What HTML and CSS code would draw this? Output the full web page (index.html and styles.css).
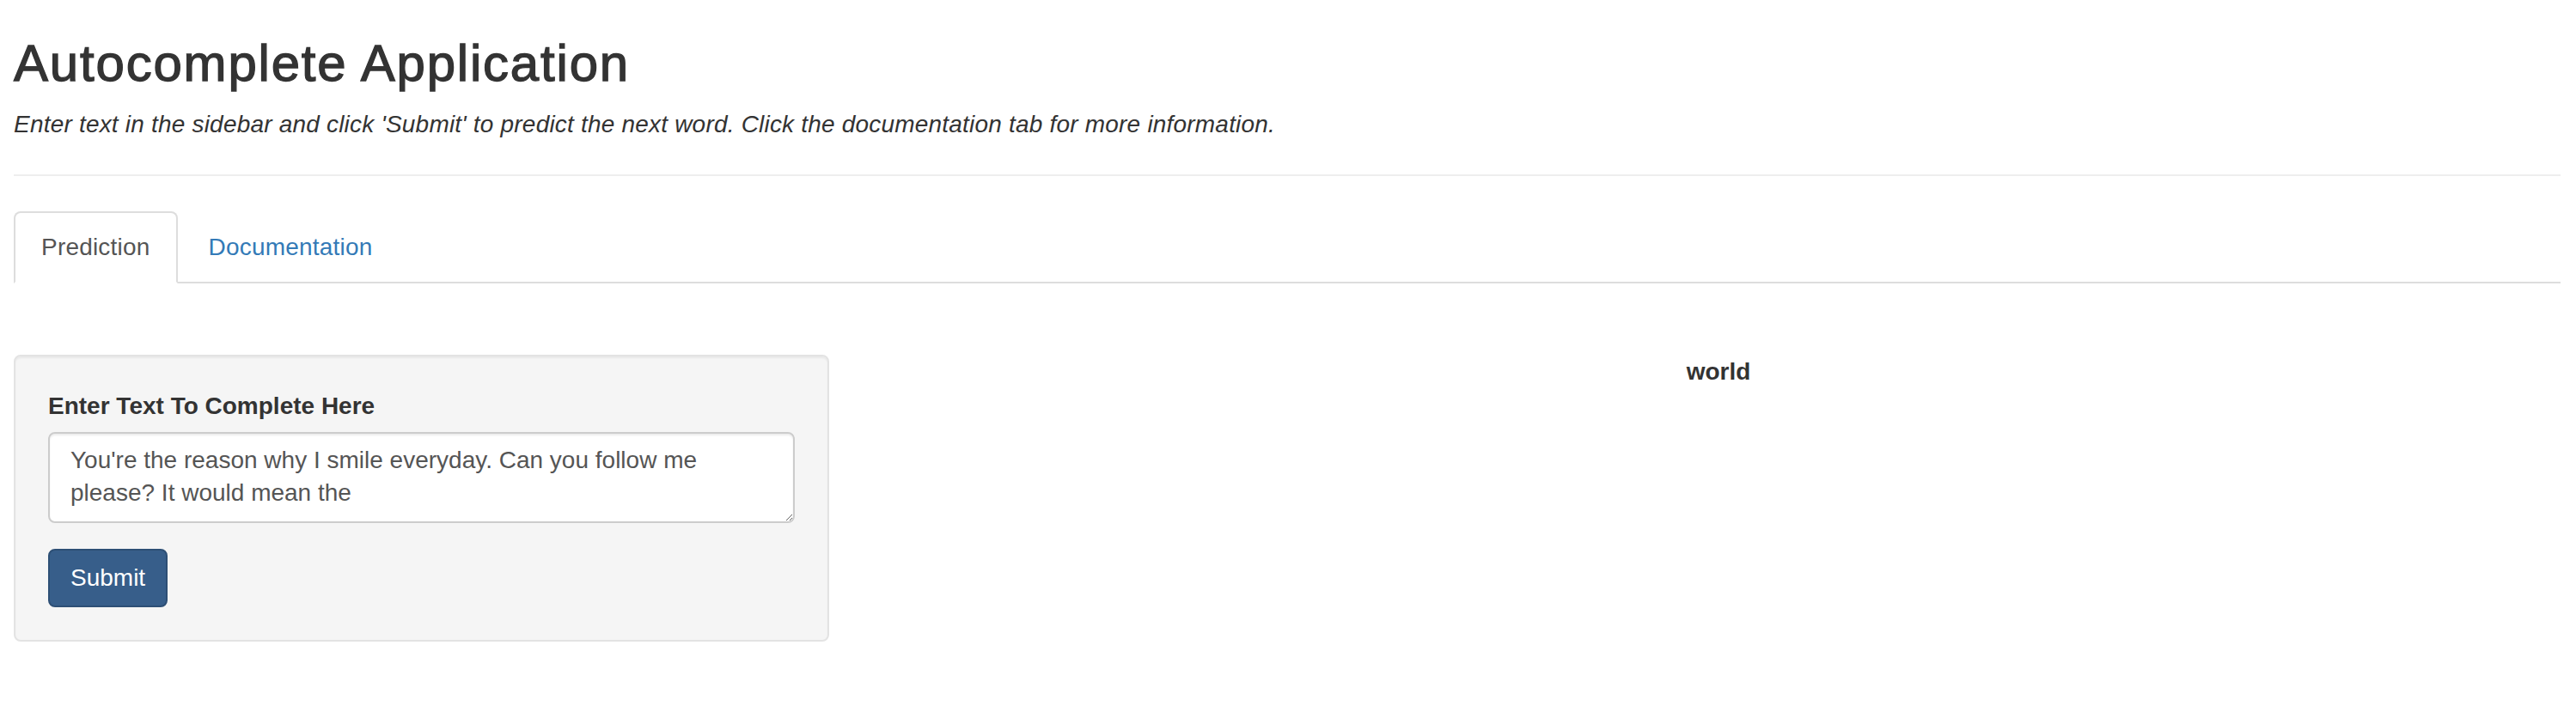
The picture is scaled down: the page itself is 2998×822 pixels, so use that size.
FILE: index.html
```html
<!DOCTYPE html>
<html>
<head>
<meta charset="utf-8">
<title>Autocomplete Application</title>
<link rel="stylesheet" href="styles.css">
</head>
<body>
<div class="page">
  <h2 class="title">Autocomplete Application</h2>
  <p class="subtitle"><em>Enter text in the sidebar and click 'Submit' to predict the next word. Click the documentation tab for more information.</em></p>
  <hr class="rule">
  <ul class="tabs">
    <li class="tab active"><a href="#">Prediction</a></li>
    <li class="tab"><a href="#">Documentation</a></li>
  </ul>
  <div class="tab-content">
    <div class="layout">
      <div class="sidebar">
        <form class="well">
          <div class="form-group">
            <label class="label" for="txt">Enter Text To Complete Here</label>
            <textarea id="txt" class="input">You're the reason why I smile everyday. Can you follow me please? It would mean the</textarea>
          </div>
          <button type="button" class="btn">Submit</button>
        </form>
      </div>
      <div class="main">
        <div class="prediction">world</div>
      </div>
    </div>
  </div>
</div>
</body>
</html>
```
FILE: styles.css
```css
html, body {
  margin: 0;
  padding: 0;
  background: #fff;
}
body {
  font-family: "Liberation Sans", Arial, Helvetica, sans-serif;
  color: #333;
  font-size: 28px;
  line-height: 40px;
}
.page {
  padding: 0 18px 0 16px;
}
.title {
  font-size: 60px;
  line-height: 66px;
  font-weight: 400;
  letter-spacing: 1.8px;
  -webkit-text-stroke: 1.3px #333;
  margin: 41px 0 18px;
  color: #333;
}
.subtitle {
  margin: 0;
  font-size: 28px;
  line-height: 40px;
  letter-spacing: 0.2px;
}
.rule {
  border: 0;
  border-top: 2px solid #eee;
  margin: 38px 0 41px;
  height: 0;
}
.tabs {
  list-style: none;
  margin: 0;
  padding: 0;
  display: flex;
  border-bottom: 2px solid #ddd;
}
.tab {
  margin-bottom: -2px;
  margin-right: 4px;
}
.tab a {
  display: block;
  padding: 20px 30px;
  line-height: 40px;
  font-size: 28px;
  letter-spacing: 0.2px;
  border: 2px solid transparent;
  border-radius: 8px 8px 0 0;
  color: #337ab7;
  text-decoration: none;
}
.tab.active a {
  color: #555;
  background: #fff;
  border-color: #ddd;
  border-bottom-color: transparent;
}
.tab-content {
  padding-top: 83px;
}
.layout {
  display: flex;
  align-items: flex-start;
}
.sidebar {
  width: 949px;
  flex: none;
}
.well {
  margin: 0;
  background: #f5f5f5;
  border: 2px solid #e3e3e3;
  border-radius: 8px;
  padding: 38px;
  box-shadow: inset 0 2px 2px rgba(0, 0, 0, 0.05);
}
.form-group {
  margin-bottom: 30px;
}
.label {
  display: block;
  font-weight: 700;
  margin-bottom: 10px;
  line-height: 40px;
}
.input {
  display: block;
  box-sizing: border-box;
  width: 100%;
  height: 106px;
  margin: 0;
  padding: 12px 24px;
  font-family: "Liberation Sans", Arial, Helvetica, sans-serif;
  font-size: 28px;
  line-height: 38px;
  color: #555;
  background: #fff;
  border: 2px solid #ccc;
  border-radius: 8px;
  box-shadow: inset 0 2px 2px rgba(0, 0, 0, 0.075);
  resize: vertical;
  outline: none;
}
.btn {
  display: inline-block;
  margin: 0;
  padding: 12px 24px;
  font-family: "Liberation Sans", Arial, Helvetica, sans-serif;
  font-size: 28px;
  line-height: 40px;
  color: #fff;
  background: #375e8a;
  border: 2px solid #2d4f75;
  border-radius: 8px;
  cursor: pointer;
}
.main {
  flex: 1;
  margin-left: 55px;
  text-align: center;
}
.prediction {
  font-weight: 700;
  line-height: 40px;
}
```
